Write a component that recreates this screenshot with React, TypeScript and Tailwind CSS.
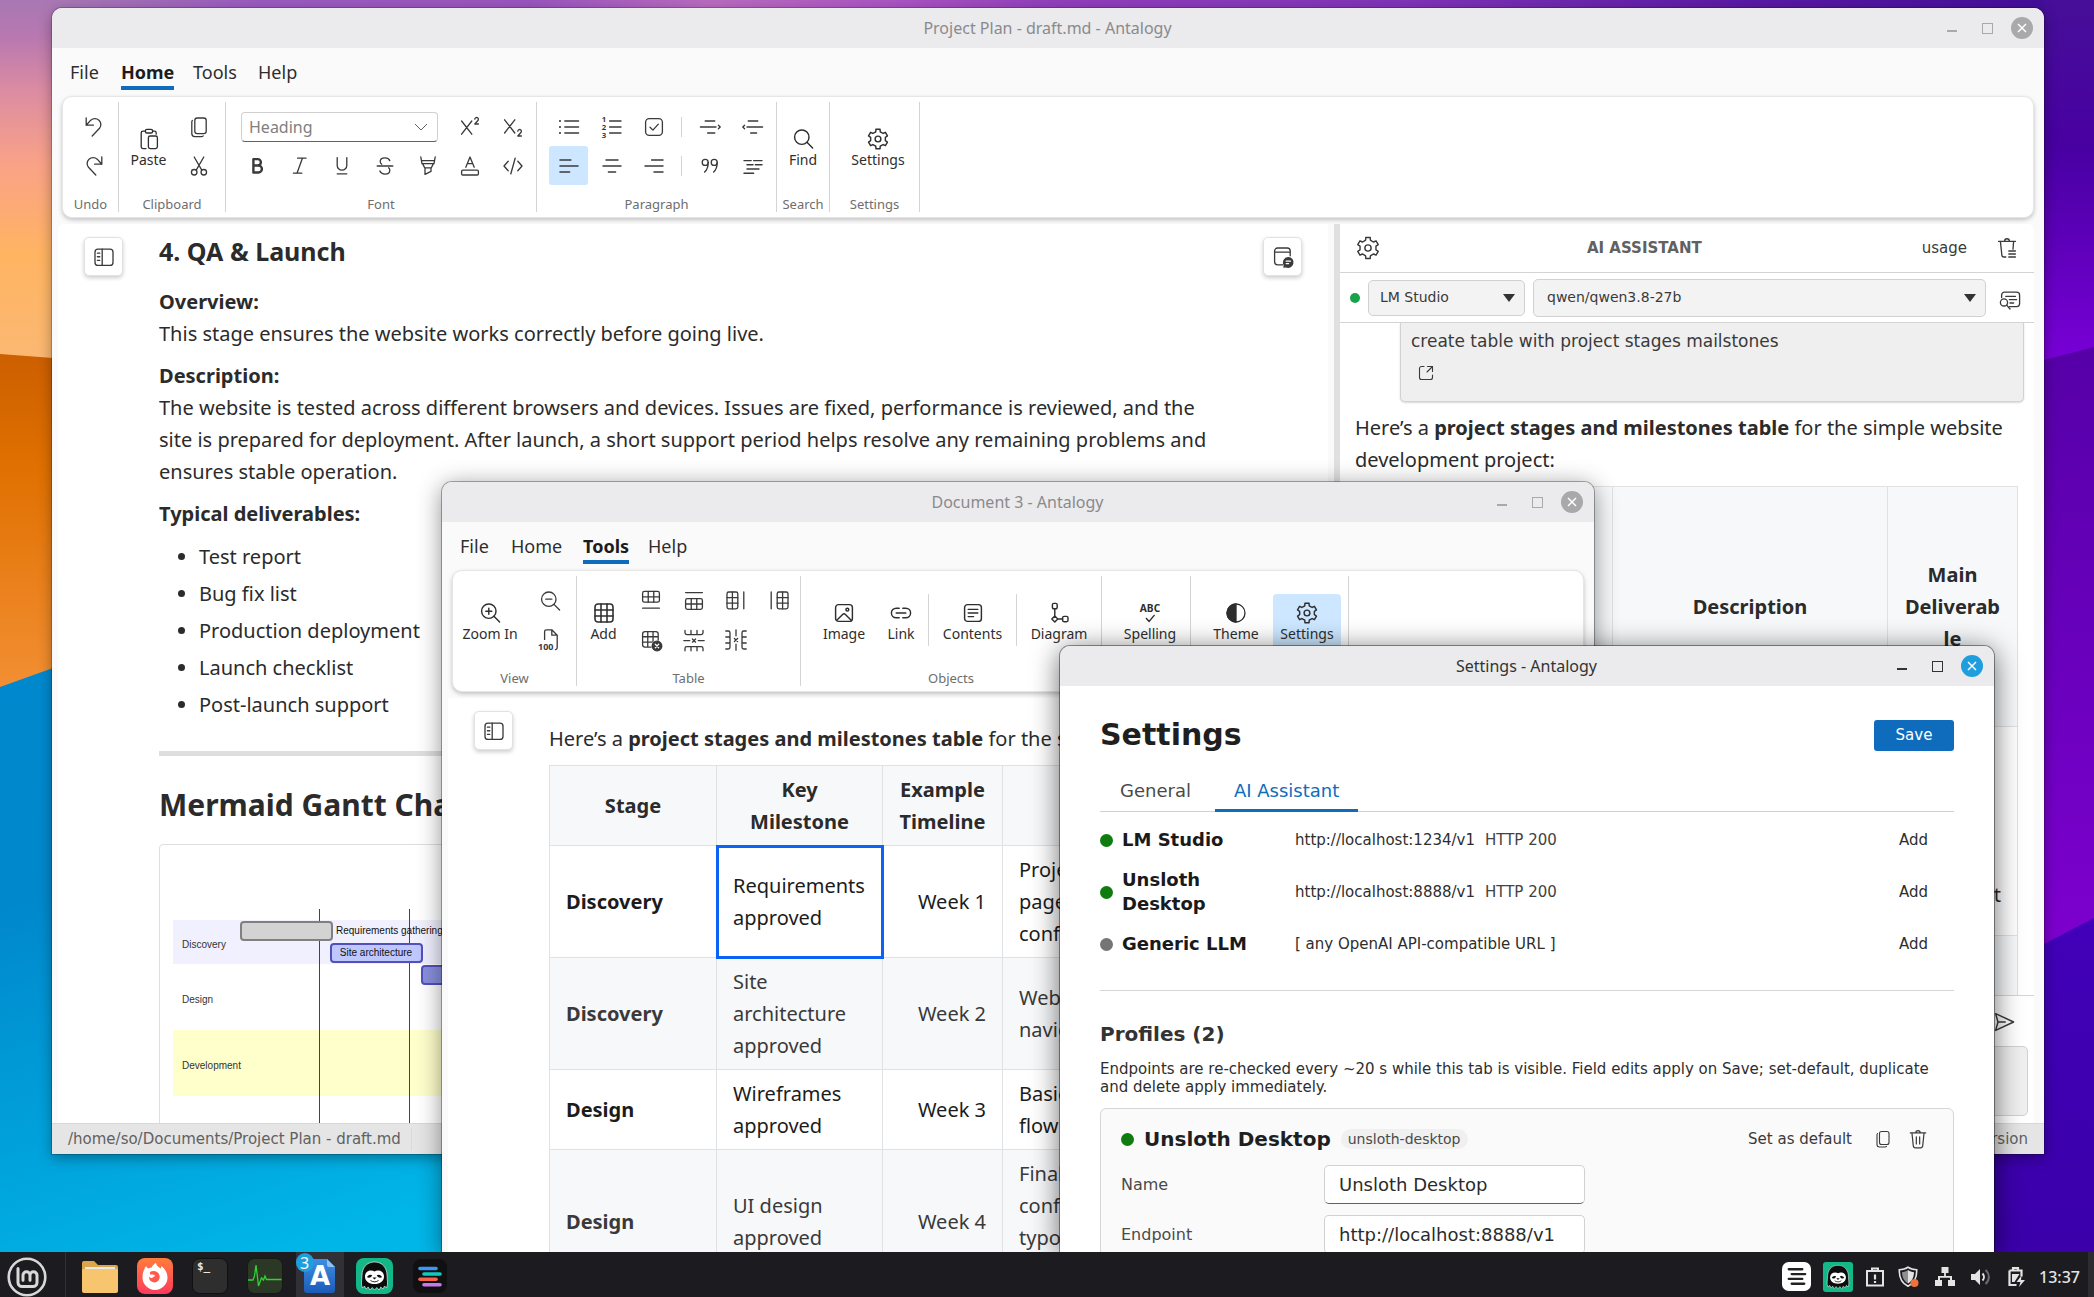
import type { ReactNode } from 'react';
import clsx from 'clsx';

/* ---------- icons ---------- */

type IconProps = { className?: string; children: ReactNode; sw?: number };

function Icon({ className = 'h-6 w-6', children, sw = 1.1 }: IconProps) {
  return (
    <svg viewBox="0 0 20 20" className={clsx('shrink-0', className)} fill="none" stroke="currentColor" strokeWidth={sw} strokeLinecap="round" strokeLinejoin="round" aria-hidden="true">
      {children}
    </svg>
  );
}

// six rounded teeth around the hub
const gearPath = (() => {
  const pts: string[] = [];
  for (let i = 0; i < 6; i++) {
    const base = i * 60 - 90;
    for (const [off, r] of [[-30, 6.1], [-17, 6.3], [-12, 8.3], [12, 8.3], [17, 6.3]]) {
      const a = ((base + off) * Math.PI) / 180;
      pts.push(`${(10 + r * Math.cos(a)).toFixed(2)} ${(10 + r * Math.sin(a)).toFixed(2)}`);
    }
  }
  return `M${pts.join('L')}Z`;
})();

const Gear = ({ className, sw }: { className?: string; sw?: number }) => (
  <Icon className={className} sw={sw}>
    <path d={gearPath} />
    <circle cx="10" cy="10" r="2.4" />
  </Icon>
);
const Undo = () => <Icon><path d="M3.5 2.5v6h6M3.5 8.5l3.8-4.2a5 5 0 0 1 7.3 6.8L8.5 17.5" /></Icon>;
const Redo = () => <Icon><path d="M16.5 2.5v6h-6M16.5 8.5l-3.8-4.2a5 5 0 0 0-7.3 6.8l6.1 6.4" /></Icon>;
const PasteIcon = () => (
  <Icon>
    <path d="M7 3.5H5A1.5 1.5 0 0 0 3.5 5v11.5A1.5 1.5 0 0 0 5 18h2.5M13 3.5h1.5A1.5 1.5 0 0 1 16 5v1" />
    <rect x="7" y="2" width="6" height="3" rx="1.3" />
    <rect x="9.5" y="7.5" width="7.5" height="10.5" rx="1.5" />
  </Icon>
);
const CopyIcon = ({ className }: { className?: string }) => (
  <Icon className={className}>
    <rect x="6.5" y="2.5" width="9.5" height="13" rx="2" />
    <path d="M4.5 4.5A2 2 0 0 0 4 6v9.5A2.5 2.5 0 0 0 6.5 18H12a2 2 0 0 0 1.5-.6" />
  </Icon>
);
const Cut = () => (
  <Icon>
    <path d="M6 2.5l6.2 10.7M14 2.5L7.8 13.2" />
    <circle cx="6" cy="15.2" r="2.3" />
    <circle cx="14" cy="15.2" r="2.3" />
  </Icon>
);
const Sup = () => (
  <Icon>
    <path d="M3 5l8.5 11M11.5 5L3 16M14 3.4a1.5 1.5 0 1 1 2.6 1.2L14 7.5h3" />
  </Icon>
);
const Sub = () => (
  <Icon>
    <path d="M3 4l8.5 11M11.5 4L3 15M14 13.4a1.5 1.5 0 1 1 2.6 1.2L14 17.5h3" />
  </Icon>
);
const Bold = () => <Icon sw={2}><path d="M7 4.3h3.6a2.6 2.6 0 0 1 0 5.3H7zM7 9.6h4.2a2.9 2.9 0 0 1 0 5.8H7z" /></Icon>;
const Italic = () => <Icon><path d="M8 3.5h7M4.5 16h7M12 3.5L7.5 16" /></Icon>;
const Underline = () => <Icon><path d="M6 3v6.5a4 4 0 0 0 8 0V3M6 16.5h8" /></Icon>;
const Strike = () => <Icon><path d="M14 5.5C13.3 4 11.9 3.3 10 3.3c-2.2 0-4 1.1-4 3 0 1 .5 1.7 1.3 2.2M3.5 10h13M13 11.5c.6.5 1 1.2 1 2 0 2-1.7 3.2-4 3.2-2 0-3.6-.9-4.3-2.5" /></Icon>;
const Highlight = () => <Icon><path d="M4 2.5l1 5.5h10l1-5.5M4.5 5.5h11M5.5 8l1.7 3.5h5.6L14.5 8M7.5 11.5V17l5-2.5v-3" /></Icon>;
const FontColor = () => <Icon><path d="M6.5 11L10 2.5 13.5 11M7.7 8h4.6" /><rect x="3" y="13.5" width="14" height="4" rx="1" /></Icon>;
const Code = () => <Icon><path d="M6 6l-3.5 4L6 14M14 6l3.5 4-3.5 4M11.8 3.5L8.2 16.5" /></Icon>;
const Bullets = () => <Icon><path d="M6.5 5H18M6.5 10H18M6.5 15H18" /><path strokeWidth="1.8" d="M2.5 5h0M2.5 10h0M2.5 15h0" /></Icon>;
const Numbers = () => (
  <Icon>
    <path d="M8 5h9.5M8 10h9.5M8 15h9.5" />
    <g fill="currentColor" stroke="none" fontSize="6.5" fontWeight="700" fontFamily="Noto Sans, sans-serif">
      <text x="1.5" y="5.8">1</text><text x="1.5" y="12.3">2</text><text x="1.5" y="18.8">3</text>
    </g>
  </Icon>
);
const Check = () => <Icon><rect x="3" y="3" width="14" height="14" rx="3" /><path d="M6.7 10.2l2.4 2.4 4.5-5" /></Icon>;
const Indent = () => <Icon><path d="M6 5h8M2 10h13M8 15h6M17 8.5l1.5 1.5-1.5 1.5" /></Icon>;
const Outdent = () => <Icon><path d="M6 5h8M5 10h13M8 15h5M3 8.5L1.5 10 3 11.5" /></Icon>;
const AlignL = () => <Icon sw={1.3}><path d="M2.5 5h9M2.5 10h15M2.5 15h8" /></Icon>;
const AlignC = () => <Icon sw={1.2}><path d="M5 5h10M2.5 10h15M7 15h6" /></Icon>;
const AlignR = () => <Icon sw={1.2}><path d="M8 5h9.5M2.5 10h15M10 15h7.5" /></Icon>;
const Quote = () => (
  <Icon>
    <circle cx="6" cy="7" r="2.5" /><path d="M8.5 7c0 3.5-.8 6-3 8" />
    <circle cx="13.5" cy="7" r="2.5" /><path d="M16 7c0 3.5-.8 6-3 8" />
  </Icon>
);
const ClearFormat = () => <Icon sw={1.2}><path d="M2.5 5.5h6M10.5 5.5h7M5 9h5M12 9h5.5M5 12.5h10M2.5 16h8" /></Icon>;
const Find = () => <Icon sw={1.2}><circle cx="9" cy="8.5" r="6" /><path d="M13.3 12.8L18 17.5" /></Icon>;
const ZoomIn = () => <Icon sw={1.2}><circle cx="9" cy="8.5" r="6" /><path d="M13.3 12.8L18 17.5M9 6v5M6.5 8.5h5" /></Icon>;
const ZoomOut = () => <Icon><circle cx="9" cy="8.5" r="6" /><path d="M13.3 12.8L18 17.5M6.5 8.5h5" /></Icon>;
const Page100 = () => (
  <Icon>
    <path d="M5.5 9.5V3A1.5 1.5 0 0 1 7 1.5h4.5L16 6v10.5a1.5 1.5 0 0 1-1.5 1.5M11.5 1.5V6H16" />
    <text x="0" y="18" fill="currentColor" stroke="none" fontSize="7.5" fontWeight="700" fontFamily="Noto Sans, sans-serif">100</text>
  </Icon>
);
const TableIcon = () => <Icon sw={1.3}><rect x="2.5" y="2.5" width="15" height="15" rx="2.5" /><path d="M2.5 7.5h15M2.5 12.5h15M7.5 2.5v15M12.5 2.5v15" /></Icon>;
const RowBelow = () => <Icon><rect x="3" y="2" width="14" height="9" rx="1.5" /><path d="M3 6.5h14M7.7 2v9M12.3 2v9M3 16h14" /></Icon>;
const RowAbove = () => <Icon><rect x="3" y="8" width="14" height="9" rx="1.5" /><path d="M3 12.5h14M7.7 8v9M12.3 8v9M3 3h14" /></Icon>;
const ColRight = () => <Icon><rect x="2.5" y="2.5" width="9" height="14" rx="1.5" /><path d="M7 2.5v14M2.5 7.2h9M2.5 11.8h9M16.5 2.5v14" /></Icon>;
const ColLeft = () => <Icon><rect x="8.5" y="2.5" width="9" height="14" rx="1.5" /><path d="M13 2.5v14M8.5 7.2h9M8.5 11.8h9M3.5 2.5v14" /></Icon>;
const TableDelete = () => (
  <Icon>
    <path d="M10 16H5a2 2 0 0 1-2-2V5a2 2 0 0 1 2-2h9a2 2 0 0 1 2 2v5M3 7.3h13M3 11.7h8M7.3 3v13M11.7 3v8" />
    <circle cx="15" cy="15" r="4" fill="currentColor" stroke="currentColor" />
    <path stroke="#fff" d="M13.6 13.6l2.8 2.8M16.4 13.6l-2.8 2.8" />
  </Icon>
);
const RowDelete = () => <Icon><path d="M2.5 2v2A1.5 1.5 0 0 0 4 5.5h12A1.5 1.5 0 0 0 17.5 4V2M7.5 2v3.5M12.5 2v3.5M2.5 19v-2A1.5 1.5 0 0 1 4 15.5h12a1.5 1.5 0 0 1 1.5 1.5v2M7.5 19v-3.5M12.5 19v-3.5M1.5 10.5h5M13.5 10.5h5M8.7 9.2l2.6 2.6M11.3 9.2l-2.6 2.6" /></Icon>;
const ColDelete = () => <Icon><path d="M1.5 2.5h2A1.5 1.5 0 0 1 5 4v12a1.5 1.5 0 0 1-1.5 1.5h-2M1.5 7.5H5M1.5 12.5H5M18.5 2.5h-2A1.5 1.5 0 0 0 15 4v12a1.5 1.5 0 0 0 1.5 1.5h2M18.5 7.5H15M18.5 12.5H15M10 1.5v5M10 13.5v5M8.7 8.7l2.6 2.6M11.3 8.7l-2.6 2.6" /></Icon>;
const ImageIcon = () => <Icon sw={1.2}><rect x="3" y="3" width="14" height="14" rx="2.5" /><circle cx="12.8" cy="7.2" r="1.2" /><path d="M4 16l4.8-4.8a1.7 1.7 0 0 1 2.4 0L16 16" /></Icon>;
const LinkIcon = () => <Icon sw={1.2}><path d="M8.5 6H6a4 4 0 0 0 0 8h2.5M11.5 6H14a4 4 0 0 1 0 8h-2.5M6 10h8" /></Icon>;
const Contents = () => <Icon sw={1.2}><rect x="3" y="3" width="14" height="14" rx="2.5" /><path d="M6 7h8M6 10h8M6 13h4.5" /></Icon>;
const Diagram = () => <Icon sw={1.2}><rect x="4.5" y="2" width="4" height="4.5" rx="1.2" /><path d="M6.5 6.5v6M4 15l2.5-2.5L9 15l-2.5 2.5zM9 15h4" /><rect x="13" y="12.8" width="4.5" height="4.5" rx="1.2" /></Icon>;
const Spelling = () => (
  <Icon>
    <text x="10" y="9" textAnchor="middle" fill="currentColor" stroke="none" fontSize="8.5" fontWeight="700" fontFamily="Noto Sans, sans-serif">ABC</text>
    <path strokeWidth="1.2" d="M7 14.5l2.3 2.5 4.2-5" />
  </Icon>
);
const Theme = () => <Icon sw={1.1}><circle cx="10" cy="10" r="7.5" /><path fill="currentColor" d="M10 2.5a7.5 7.5 0 0 0 0 15z" /></Icon>;
const Sidebar = () => <Icon><rect x="2.5" y="3.5" width="15" height="13.5" rx="2.5" /><path d="M8.5 3.5V17M4.5 6.8h2M4.5 9.8h2M4.5 12.8h2" /></Icon>;
const PanelChat = () => (
  <Icon>
    <path d="M10 16.5H5.5A2.5 2.5 0 0 1 3 14V5a2.5 2.5 0 0 1 2.5-2.5h8A2.5 2.5 0 0 1 16 5v4M3 6h13" />
    <path fill="currentColor" d="M14.3 10.5a4 4 0 1 1-2 7.5l-1.5.4.4-1.6a4 4 0 0 1 3.1-6.3z" />
    <path stroke="#fff" d="M12.7 13.5h3.5M12.7 15.5h2" />
  </Icon>
);
const TrashLines = () => <Icon><path d="M3 4.5h14M8 4.3a2 2 0 0 1 4 0M4.5 4.5l1.2 11.3A1.8 1.8 0 0 0 7.5 17.5H9M15.5 4.5L15 11M11.5 12.5H17M11.5 15H17M11.5 17.5H17" /></Icon>;
const Trash = () => <Icon className="h-[22px] w-[22px]"><path d="M3 4.5h14M8 4.3a2 2 0 0 1 4 0M4.5 4.5l1.2 11.5A2 2 0 0 0 7.7 18h4.6a2 2 0 0 0 2-2l1.2-11.5M8.5 8v6.5M11.5 8v6.5" /></Icon>;
const ChatSearch = () => <Icon><path d="M3 8V6a2.5 2.5 0 0 1 2.5-2.5h10A2.5 2.5 0 0 1 18 6v7a2.5 2.5 0 0 1-2.5 2.5h-6M6.5 7h8M9.5 9.7h6M10 12.5h3" /><circle cx="5" cy="12" r="3" /><path d="M7.2 14.3l2.8 3.2" /></Icon>;
const OpenIcon = () => <Icon className="h-5 w-5"><path d="M8 3.5H5.5a2 2 0 0 0-2 2v9a2 2 0 0 0 2 2h9a2 2 0 0 0 2-2V12M11.5 3.5h5v5M16.5 3.5L11 9" /></Icon>;
const Send = () => <Icon sw={1.2}><path d="M3 3l15 7-15 7 2-7zM5 10h6" /></Icon>;
const Caret = () => (
  <svg viewBox="0 0 12 8" className="pointer-events-none absolute right-[10px] h-2 w-3" aria-hidden="true"><path d="M0 0h12L6 8z" fill="#333" /></svg>
);

const Sloth = ({ className }: { className?: string }) => (
  <svg viewBox="0 0 36 36" className={className} aria-hidden="true">
    <path d="M18 4C10 4 5.5 10 5.5 17.5 5.5 22 4 26 6 30l2-2 1.5 3 2.2-2 1.8 3 2.2-2.5L18 32l2.3-2.5 2.2 2.5 1.8-3 2.2 2 1.5-3 2 2c2-4 .5-8 .5-12.5C30.5 10 26 4 18 4z" fill="#0c0c0c" stroke="#fff" strokeWidth="0.6" />
    <path d="M18 13.5c3-2 9-1 9.5 4.5.3 5-4 8-9.5 8s-9.8-3-9.5-8c.5-5.5 6.5-6.5 9.5-4.5z" fill="#fff" />
    <path d="M10.500 19.300c.8-2.300 3.300-3.300 5.200-2-.7 2.100-2.900 3.100-5.200 2zM25.500 19.300c-.8-2.300-3.300-3.300-5.200-2 .7 2.100 2.900 3.100 5.200 2z" fill="#0c0c0c" />
    <path d="M16 19.500h4l-2 2z" fill="#0c0c0c" />
    <path d="M14 22.500c2.300 1.800 5.700 1.800 8 0" fill="none" stroke="#0c0c0c" strokeWidth="0.9" />
  </svg>
);

/* ---------- shared window parts ---------- */

type WindowProps = { title: string; active?: boolean; className: string; children: ReactNode };

function Window({ title, active, className, children }: WindowProps) {
  const tone = active ? 'text-[#333333]' : 'text-[#8a8a8c]';
  return (
    <section aria-label={title} className={clsx('absolute flex flex-col overflow-hidden rounded-t-[10px] bg-[#fafafa] ring-1', className)}>
      <header className={clsx('flex h-10 shrink-0 items-center bg-[#ebebed] pr-[11px] pl-[102px]', tone)}>
        <h2 className="flex-1 text-center text-[16px]">{title}</h2>
        <div className={clsx('flex items-center gap-[13px]', active ? 'text-[#333333]' : 'text-[#a9a9ab]')}>
          <button aria-label="Minimize" className="flex h-[22px] w-[22px] items-center justify-center pt-[6px]"><span className="h-[2px] w-[10px] bg-current" /></button>
          <button aria-label="Maximize" className="flex h-[22px] w-[22px] items-center justify-center"><span className="h-[11px] w-[11px] border border-current" /></button>
          <button aria-label="Close" className={clsx('flex h-[22px] w-[22px] items-center justify-center rounded-full text-white', active ? 'bg-[#1f9ede]' : 'bg-[#a9a9ab]')}>
            <svg viewBox="0 0 10 10" className="h-[10px] w-[10px]" stroke="currentColor" strokeWidth="1.5"><path d="M1 1l8 8M9 1L1 9" /></svg>
          </button>
        </div>
      </header>
      {children}
    </section>
  );
}

function Menu({ current }: { current: string }) {
  const tabs = [['File', 'w-[51px]'], ['Home', 'w-[72px]'], ['Tools', 'w-[65px]'], ['Help', 'w-[60px]']];
  return (
    <nav className="flex h-12 shrink-0 items-center pl-[18px] text-[18px] text-[#2e2e2e]">
      {tabs.map(([name, width]) => (
        <div key={name} className={width}>
          <button className={clsx('h-[36px] border-b-4 pt-1 leading-[26px]', name === current ? 'border-[#0f6cbd] font-bold text-[#1c1c1c]' : 'border-transparent')}>{name}</button>
        </div>
      ))}
    </nav>
  );
}

const Ribbon = ({ children }: { children: ReactNode }) => (
  <div className="mx-[10px] mb-[6px] flex h-[122px] shrink-0 rounded-[10px] border border-[#e6e6e6] bg-white py-[5px] shadow-[0_2px_4px_rgba(0,0,0,0.22)]">{children}</div>
);

function Group({ label, className, children }: { label: string; className: string; children: ReactNode }) {
  return (
    <div className={clsx('flex shrink-0 flex-col border-r border-[#d4d4d4]', className)}>
      <div className="mt-[5px] flex h-[78px] text-[#3a3a3a]">{children}</div>
      <div className="mt-auto text-center text-[13px] leading-4 text-[#6e6e6e]">{label}</div>
    </div>
  );
}

function BigButton({ label, icon, className, active }: { label: string; icon: ReactNode; className: string; active?: boolean }) {
  return (
    <button className={clsx('mt-[13px] flex h-[56px] shrink-0 flex-col items-center rounded pt-[7px] text-[14px] leading-[17px] text-[#2e2e2e]', active && 'bg-[#cce7ff]', className)}>
      {icon}
      {label}
    </button>
  );
}

const Tool = ({ label, active, children }: { label: string; active?: boolean; children: ReactNode }) => (
  <button aria-label={label} className={clsx('mx-auto flex h-[39px] w-[39px] items-center justify-center rounded-[3px]', active && 'bg-[#cce7ff]')}>{children}</button>
);

const FloatButton = ({ label, children }: { label: string; children: ReactNode }) => (
  <button aria-label={label} className="mt-[13px] flex h-[39px] w-[39px] shrink-0 items-center justify-center rounded-[5px] border border-[#e2e2e2] bg-white text-[#3a3a3a] shadow-[0_2px_4px_rgba(0,0,0,0.2)]">{children}</button>
);

/* ---------- project plan window ---------- */

function HomeRibbon() {
  return (
    <Ribbon>
      <Group label="Undo" className="w-[56px]">
        <div className="ml-[11px] flex w-10 flex-col">
          <Tool label="Undo"><Undo /></Tool>
          <Tool label="Redo"><Redo /></Tool>
        </div>
      </Group>
      <Group label="Clipboard" className="w-[107px]">
        <BigButton label="Paste" icon={<PasteIcon />} className="w-[59px]" />
        <div className="flex w-[42px] flex-col">
          <Tool label="Copy"><CopyIcon /></Tool>
          <Tool label="Cut"><Cut /></Tool>
        </div>
      </Group>
      <Group label="Font" className="w-[311px]">
        <div className="ml-[10px] grid w-[298px] grid-cols-7 items-center">
          <div className="relative col-span-5 ml-[5px] flex w-[197px] items-center">
            <select aria-label="Text style" className="h-[30px] w-full appearance-none rounded-[4px] border border-[#d1d1d1] border-b-[#616161] bg-white pl-[7px] text-[16px] text-[#808080]">
              <option>Heading</option>
            </select>
            <svg viewBox="0 0 14 8" className="pointer-events-none absolute right-[10px] h-2 w-[14px]" fill="none" stroke="#616161" aria-hidden="true"><path d="M1 1l6 6 6-6" /></svg>
          </div>
          <Tool label="Superscript"><Sup /></Tool>
          <Tool label="Subscript"><Sub /></Tool>
          <Tool label="Bold"><Bold /></Tool>
          <Tool label="Italic"><Italic /></Tool>
          <Tool label="Underline"><Underline /></Tool>
          <Tool label="Strikethrough"><Strike /></Tool>
          <Tool label="Highlight"><Highlight /></Tool>
          <Tool label="Font color"><FontColor /></Tool>
          <Tool label="Code"><Code /></Tool>
        </div>
      </Group>
      <Group label="Paragraph" className="w-[240px]">
        <div className="ml-[10px] grid grid-cols-[43px_43px_42px_13px_43px_43px] items-center">
          <Tool label="Bullets"><Bullets /></Tool>
          <Tool label="Numbering"><Numbers /></Tool>
          <Tool label="Task list"><Check /></Tool>
          <i className="mx-auto h-5 w-px bg-[#d4d4d4]" />
          <Tool label="Indent"><Indent /></Tool>
          <Tool label="Outdent"><Outdent /></Tool>
          <Tool label="Align left" active><AlignL /></Tool>
          <Tool label="Align center"><AlignC /></Tool>
          <Tool label="Align right"><AlignR /></Tool>
          <i className="mx-auto h-5 w-px bg-[#d4d4d4]" />
          <Tool label="Quote"><Quote /></Tool>
          <Tool label="Clear formatting"><ClearFormat /></Tool>
        </div>
      </Group>
      <Group label="Search" className="w-[53px]">
        <BigButton label="Find" icon={<Find />} className="w-[52px]" />
      </Group>
      <Group label="Settings" className="w-[90px]">
        <BigButton label="Settings" icon={<Gear sw={1.2} />} className="ml-[14px] w-[68px]" />
      </Group>
    </Ribbon>
  );
}

function Gantt() {
  return (
    <svg className="block h-[290px] w-full" fontFamily="Liberation Sans, sans-serif" fontSize="10" aria-label="Gantt chart">
      <rect x="13" y="75" width="1040" height="44" fill="#f0f0ff" />
      <rect x="13" y="185" width="1040" height="66" fill="#ffffcc" />
      <g fill="#333">
        <text x="22" y="103">Discovery</text>
        <text x="22" y="158">Design</text>
        <text x="22" y="224">Development</text>
      </g>
      <path d="M159.5 64v226M249.5 64v226" stroke="#444" />
      <rect x="81" y="77" width="91" height="18" rx="3" fill="#d3d3d3" stroke="#808080" strokeWidth="2" />
      <rect x="171" y="99" width="91" height="18" rx="3" fill="#bfc7ff" stroke="#534fbc" strokeWidth="2" />
      <rect x="262" y="121" width="91" height="18" rx="3" fill="#8a90dd" stroke="#534fbc" strokeWidth="2" />
      <text x="176" y="89" fill="#111">Requirements gathering</text>
      <text x="216" y="111" fill="#111" textAnchor="middle">Site architecture</text>
    </svg>
  );
}

const deliverables = ['Test report', 'Bug fix list', 'Production deployment', 'Launch checklist', 'Post-launch support'];

function PlanDocument() {
  return (
    <main className="flex min-w-0 flex-1 items-start justify-between overflow-hidden rounded-tl-md bg-white px-[26px]">
      <FloatButton label="Toggle outline"><Sidebar /></FloatButton>
      <article className="mr-[35px] ml-[36px] min-w-0 flex-1 pt-[11px] text-[20px] leading-8 text-[#2b2b2b]">
        <h3 className="mb-[19px] text-[25px] leading-8 font-bold">4. QA &amp; Launch</h3>
        <p className="mb-[10px]"><b>Overview:</b><br />This stage ensures the website works correctly before going live.</p>
        <p className="mb-[10px]">
          <b>Description:</b><br />
          The website is tested across different browsers and devices. Issues are fixed, performance is reviewed, and the site is prepared for deployment. After launch, a short support period helps resolve any remaining problems and ensures stable operation.
        </p>
        <p className="mb-[11px] font-bold">Typical deliverables:</p>
        <ul className="mb-[30px] list-disc space-y-[5px] pl-10">
          {deliverables.map((d) => <li key={d}>{d}</li>)}
        </ul>
        <hr className="mb-[29px] border-t-[5px] border-[#dedede]" />
        <h2 className="mb-[19px] text-[30px] leading-10 font-bold">Mermaid Gantt Chart</h2>
        <div className="rounded-[4px] border border-[#dedede]"><Gantt /></div>
      </article>
      <FloatButton label="Toggle assistant"><PanelChat /></FloatButton>
    </main>
  );
}

const dejavu = "font-['DejaVu_Sans',sans-serif]";

function Assistant() {
  return (
    <aside className="flex w-[694px] shrink-0 flex-col overflow-hidden rounded-tr-md bg-white text-[#3a3a3a]">
      <div className={clsx('flex h-[49px] shrink-0 items-center border-b border-[#d4d4d4] pr-[15px] pl-[15px]', dejavu)}>
        <button aria-label="Assistant settings"><Gear className="h-[26px] w-[26px]" /></button>
        <h3 className="flex-1 pr-[14px] text-center text-[15px] font-bold text-[#616161]">AI ASSISTANT</h3>
        <a href="#usage" className="mr-[28px] text-[15px]">usage</a>
        <button aria-label="Clear chat"><TrashLines /></button>
      </div>
      <div className={clsx('flex h-[50px] shrink-0 items-center border-b border-[#d4d4d4] pr-[12px] pl-[10px] text-[14px]', dejavu)}>
        <span className="h-[10px] w-[10px] rounded-full bg-[#16a34a]" />
        <div className="relative ml-2 flex w-[157px] items-center">
          <select aria-label="Provider" className="h-9 w-full appearance-none rounded-[5px] border border-[#d1d1d1] bg-[#f3f3f3] pl-[11px]"><option>LM Studio</option></select>
          <Caret />
        </div>
        <div className="relative ml-2 flex flex-1 items-center">
          <select aria-label="Model" className="h-[38px] w-full appearance-none rounded-[5px] border border-[#d1d1d1] bg-[#f3f3f3] pl-[13px]"><option>qwen/qwen3.8-27b</option></select>
          <Caret />
        </div>
        <button aria-label="Search chat" className="mt-1 ml-3"><ChatSearch /></button>
      </div>
      <div className="min-h-0 flex-1 overflow-hidden pr-[10px] pl-[15px] text-[20px] leading-8 text-[#2b2b2b]">
        <div className={clsx('ml-[45px] h-[79px] rounded-b-[5px] border border-t-0 border-[#d1d1d1] bg-[#efefef] pt-[2px] pl-[10px] text-[17px] text-[#3a3a3a] shadow-[0_1px_2px_rgba(0,0,0,0.15)]', dejavu)}>
          <p>create table with project stages mailstones</p>
          <button aria-label="Open message" className="mt-[6px] ml-[5px] block"><OpenIcon /></button>
        </div>
        <p className="mt-[10px] mb-[10px]">Here’s a <b>project stages and milestones table</b> for the simple website development project:</p>
        <table className="mr-[6px] w-[663px] table-fixed border-collapse text-center [&_td]:border [&_td]:border-[#dfe2e5] [&_th]:border [&_th]:border-[#dfe2e5]">
          <colgroup><col className="w-[86px]" /><col className="w-[86px]" /><col className="w-[85px]" /><col /><col className="w-[130px]" /></colgroup>
          <thead>
            <tr className="h-[240px] bg-[#f6f8fa]"><th /><th /><th /><th>Description</th><th>Main<br />Deliverab<br />le</th></tr>
          </thead>
          <tbody>
            <tr className="h-[209px]"><td /><td /><td /><td /><td className="pr-4 pb-[24px] text-right align-bottom">document</td></tr>
            <tr className="h-[209px] bg-[#f6f8fa]"><td /><td /><td /><td /><td /></tr>
          </tbody>
        </table>
      </div>
      <div className="flex h-[128px] shrink-0 flex-col border-t border-[#d4d4d4] pr-[6px] pb-[7px] pl-[10px]">
        <button aria-label="Send" className="mt-[14px] mr-[12px] mb-auto self-end"><Send /></button>
        <textarea aria-label="Message" className="h-[70px] resize-none rounded-[5px] border border-[#d1d1d1] bg-[#efefef]" />
      </div>
    </aside>
  );
}

function PlanWindow() {
  return (
    <Window title="Project Plan - draft.md - Antalogy" className="top-2 right-[50px] bottom-[98px] left-[52px] shadow-[0_4px_14px_rgba(0,0,0,0.35)] ring-black/20">
      <Menu current="Home" />
      <HomeRibbon />
      <div className="flex min-h-0 flex-1 pr-[10px] pl-[6px]">
        <PlanDocument />
        <div className="ml-[6px] w-[6px] shrink-0 bg-[#e0e0e0]" />
        <Assistant />
      </div>
      <footer className={clsx('flex h-[31px] shrink-0 items-center border-t border-[#d8d8d8] bg-[#e5e5e5] px-4 text-[15px] text-[#616161]', dejavu)}>
        <span className="border-r border-[#dadada] pr-[10px]">/home/so/Documents/Project Plan - draft.md</span>
        <span className="ml-auto">Version</span>
      </footer>
    </Window>
  );
}

/* ---------- document 3 window ---------- */

function ToolsRibbon() {
  return (
    <Ribbon>
      <Group label="View" className="w-[124px]">
        <BigButton label="Zoom In" icon={<ZoomIn />} className="ml-px w-[72px]" />
        <div className="flex w-12 flex-col">
          <Tool label="Zoom out"><ZoomOut /></Tool>
          <Tool label="Actual size"><Page100 /></Tool>
        </div>
      </Group>
      <Group label="Table" className="w-[224px]">
        <BigButton label="Add" icon={<TableIcon />} className="w-[53px]" />
        <div className="grid w-[170px] grid-cols-4">
          <Tool label="Row below"><RowBelow /></Tool>
          <Tool label="Row above"><RowAbove /></Tool>
          <Tool label="Column right"><ColRight /></Tool>
          <Tool label="Column left"><ColLeft /></Tool>
          <Tool label="Delete table"><TableDelete /></Tool>
          <Tool label="Delete row"><RowDelete /></Tool>
          <Tool label="Delete column"><ColDelete /></Tool>
        </div>
      </Group>
      <Group label="Objects" className="w-[301px]">
        <BigButton label="Image" icon={<ImageIcon />} className="ml-[13px] w-[60px]" />
        <BigButton label="Link" icon={<LinkIcon />} className="w-[54px]" />
        <i className="mt-[13px] h-[52px] w-px bg-[#d4d4d4]" />
        <BigButton label="Contents" icon={<Contents />} className="w-[87px]" />
        <i className="mt-[13px] h-[52px] w-px bg-[#d4d4d4]" />
        <BigButton label="Diagram" icon={<Diagram />} className="w-[84px]" />
      </Group>
      <Group label="Proofing" className="w-[89px]">
        <BigButton label="Spelling" icon={<Spelling />} className="ml-2 w-[80px]" />
      </Group>
      <Group label="Settings" className="w-[158px]">
        <BigButton label="Theme" icon={<Theme />} className="ml-2 w-[74px]" />
        <BigButton label="Settings" icon={<Gear sw={1.2} />} className="w-[68px]" active />
      </Group>
    </Ribbon>
  );
}

const stages = [
  { stage: 'Discovery', milestone: 'Requirements approved', week: 'Week 1', about: ['Project goals,', 'pages and scope', 'confirmed'] },
  { stage: 'Discovery', milestone: 'Site architecture approved', week: 'Week 2', about: ['Website map and', 'navigation ready'] },
  { stage: 'Design', milestone: 'Wireframes approved', week: 'Week 3', about: ['Basic layout and', 'flow defined'] },
  { stage: 'Design', milestone: 'UI design approved', week: 'Week 4', about: ['Final visuals', 'confirmed with', 'typography and', 'colors'] },
];

function DocumentWindow() {
  return (
    <Window title="Document 3 - Antalogy" className="top-[482px] right-[500px] bottom-0 left-[442px] shadow-[0_4px_24px_rgba(0,0,0,0.45)] ring-black/30">
      <Menu current="Tools" />
      <ToolsRibbon />
      <div className="flex min-h-0 flex-1 items-start overflow-hidden pl-[6px]">
        <div className="flex h-full w-full items-start bg-white pl-[26px]">
          <FloatButton label="Toggle outline"><Sidebar /></FloatButton>
          <article className="ml-[36px] pt-[25px] text-[20px] leading-8 text-[#2b2b2b]">
            <p className="mb-[10px]">Here’s a <b>project stages and milestones table</b> for the simple website development project:</p>
            <table className="w-[900px] table-fixed border-collapse [&_td]:border [&_td]:border-[#dfe2e5] [&_td]:px-4 [&_td]:pt-2 [&_td]:pb-[7px] [&_th]:border [&_th]:border-[#dfe2e5] [&_th]:px-4 [&_th]:pt-2 [&_th]:pb-[7px]">
              <colgroup><col className="w-[167px]" /><col className="w-[166px]" /><col className="w-[120px]" /><col /></colgroup>
              <thead className="bg-[#f6f8fa]">
                <tr><th>Stage</th><th>Key<br />Milestone</th><th className="whitespace-nowrap">Example<br />Timeline</th><th>Description</th></tr>
              </thead>
              <tbody>
                {stages.map((s, i) => (
                  <tr key={s.week} className={i % 2 ? 'bg-[#f6f8fa] text-[#3a3a3a]' : 'bg-white text-[#1c1c1c]'}>
                    <td className="font-bold">{s.stage}</td>
                    <td className={clsx(i === 0 && 'outline-[3px] -outline-offset-2 outline-[#0b63f6]')}>{s.milestone}</td>
                    <td className="text-right">{s.week}</td>
                    <td>{s.about.map((line) => <div key={line}>{line}</div>)}</td>
                  </tr>
                ))}
              </tbody>
            </table>
          </article>
        </div>
      </div>
    </Window>
  );
}

/* ---------- settings window ---------- */

const endpoints = [
  { name: 'LM Studio', url: 'http://localhost:1234/v1', status: 'HTTP 200', up: true },
  { name: 'Unsloth Desktop', url: 'http://localhost:8888/v1', status: 'HTTP 200', up: true },
  { name: 'Generic LLM', url: '[ any OpenAI API-compatible URL ]', status: '', up: false },
];

const Dot = ({ up }: { up: boolean }) => <span className={clsx('h-[13px] w-[13px] shrink-0 rounded-full', up ? 'bg-[#107c10]' : 'bg-[#757575]')} />;

function Field({ id, label, value }: { id: string; label: string; value: string }) {
  return (
    <div className="flex items-center">
      <label htmlFor={id} className="w-[203px] text-[16px] text-[#4a4a4a]">{label}</label>
      <input id={id} defaultValue={value} className="h-[39px] w-[261px] rounded-[5px] border border-[#d1d1d1] border-b-[#616161] bg-white px-[14px] text-[18px] text-[#2b2b2b]" />
    </div>
  );
}

function SettingsWindow() {
  return (
    <Window title="Settings - Antalogy" active className="top-[646px] right-[100px] bottom-0 left-[1060px] shadow-[0_4px_28px_rgba(0,0,0,0.6)] ring-black/40">
      <div className={clsx('flex-1 overflow-hidden bg-white px-10 text-[#1f1f1f]', dejavu)}>
        <div className="mt-[30px] flex items-center justify-between">
          <h1 className="text-[30px] leading-[38px] font-bold">Settings</h1>
          <button className="h-[31px] w-[80px] rounded-[3px] bg-[#0f6cbd] text-[15px] text-white">Save</button>
        </div>
        <div role="tablist" className="mt-[18px] flex h-10 border-b border-[#d1d1d1] text-[18px]">
          <button role="tab" aria-selected="false" className="pr-[18px] pb-[3px] pl-[20px] text-[#4a4a4a]">General</button>
          <button role="tab" aria-selected="true" className="-mb-px ml-[6px] border-b-[3px] border-[#0f6cbd] px-[19px] text-[#0f6cbd]">AI Assistant</button>
        </div>
        <ul className="mt-[2px] mb-[20px]">
          {endpoints.map((e) => (
            <li key={e.name} className="flex min-h-[52px] items-center text-[15px] text-[#2e2e2e]">
              <Dot up={e.up} />
              <b className="ml-[9px] w-[173px] pr-6 text-[18px] leading-6 text-[#1a1a1a]">{e.name}</b>
              <span>{e.url}</span>
              <span className="ml-[10px] text-[#424242]">{e.status}</span>
              <button className="mr-[26px] ml-auto">Add</button>
            </li>
          ))}
        </ul>
        <hr className="border-[#d6d6d6]" />
        <h2 className="mt-[31px] text-[20px] leading-6 font-bold text-[#333333]">Profiles (2)</h2>
        <p className="mt-[14px] text-[15px] leading-[18px] text-[#2e2e2e]">Endpoints are re-checked every ~20 s while this tab is visible. Field edits apply on Save; set-default, duplicate and delete apply immediately.</p>
        <section className="mt-3 h-[300px] rounded-[6px] border border-[#d6d6d6] bg-[#fafafa] pr-6 pl-5">
          <div className="mt-[16px] mb-[12px] flex h-[28px] items-center">
            <Dot up />
            <h3 className="ml-[10px] text-[20px] font-bold">Unsloth Desktop</h3>
            <span className="ml-[10px] rounded-full bg-[#f0f0f0] px-[7px] text-[14px] leading-[20px] text-[#4a4a4a]">unsloth-desktop</span>
            <button className="ml-auto text-[15px] text-[#3a3a3a]">Set as default</button>
            <button aria-label="Duplicate" className="ml-[21px] text-[#3a3a3a]"><CopyIcon className="h-5 w-5" /></button>
            <button aria-label="Delete" className="ml-[14px] text-[#3a3a3a]"><Trash /></button>
          </div>
          <div className="space-y-[11px]">
            <Field id="profile-name" label="Name" value="Unsloth Desktop" />
            <Field id="profile-endpoint" label="Endpoint" value="http://localhost:8888/v1" />
          </div>
        </section>
      </div>
    </Window>
  );
}

/* ---------- desktop ---------- */

function Wallpaper() {
  return (
    <svg viewBox="0 0 2094 1252" preserveAspectRatio="none" className="absolute inset-0 h-full w-full" aria-hidden="true">
      <defs>
        <linearGradient id="top"><stop offset="0" stopColor="#a878b4" /><stop offset=".1" stopColor="#9a5cc0" /><stop offset=".24" stopColor="#9a56bf" /><stop offset=".33" stopColor="#ba6cc0" /><stop offset=".42" stopColor="#ac55c4" /><stop offset=".5" stopColor="#9240bc" /><stop offset=".68" stopColor="#8034b8" /><stop offset=".85" stopColor="#5a1aa4" /><stop offset="1" stopColor="#430e98" /></linearGradient>
        <linearGradient id="peach" x2="0" y2="1"><stop offset="0" stopColor="#a878b4" /><stop offset=".1" stopColor="#b878b0" /><stop offset=".25" stopColor="#dc8ca2" /><stop offset=".45" stopColor="#faa287" /><stop offset=".7" stopColor="#ffb462" /><stop offset="1" stopColor="#fbb873" /></linearGradient>
        <linearGradient id="orange" x2="0" y2="1"><stop offset="0" stopColor="#cc5f00" /><stop offset=".25" stopColor="#e07000" /><stop offset=".8" stopColor="#f49238" /></linearGradient>
        <linearGradient id="sea" x2=".25" y2="1"><stop offset="0" stopColor="#0088d0" /><stop offset=".5" stopColor="#0088cc" /><stop offset="1" stopColor="#00b6e8" /></linearGradient>
        <linearGradient id="violet" x2="0" y2="1"><stop offset="0" stopColor="#460f98" /><stop offset=".4" stopColor="#4800a2" /><stop offset="1" stopColor="#7a00d8" /></linearGradient>
        <linearGradient id="magenta" x2="0" y2="1"><stop offset="0" stopColor="#5600a8" /><stop offset=".5" stopColor="#6a00be" /><stop offset="1" stopColor="#8000d0" /></linearGradient>
        <linearGradient id="indigo" x2="0" y2="1"><stop offset="0" stopColor="#4200b8" /><stop offset="1" stopColor="#3a00a8" /></linearGradient>
      </defs>
      <rect width="2094" height="30" fill="url(#top)" />
      <rect width="300" height="364" fill="url(#peach)" />
      <path d="M0 354l53 4 250 40v400H0z" fill="url(#orange)" />
      <path d="M0 687l53-19 600-200v829H0z" fill="url(#sea)" />
      <rect x="2040" width="54" height="366" fill="url(#violet)" />
      <path d="M2094 347l-50 13-150 30v600h200z" fill="url(#magenta)" />
      <path d="M2094 918l-50 26-250 140v213h300z" fill="url(#indigo)" />
      <rect x="54" width="1990" height="12" fill="url(#top)" />
    </svg>
  );
}

const Launcher = ({ label, active, children }: { label: string; active?: boolean; children: ReactNode }) => (
  <button aria-label={label} className="flex h-full w-[55px] items-center justify-center">
    <span className={clsx('relative flex h-full w-12 items-center justify-center', active && 'bg-[#303036]')}>{children}</span>
  </button>
);

const TrayItem = ({ label, className = 'w-9', children }: { label: string; className?: string; children: ReactNode }) => (
  <button aria-label={label} className={clsx('flex items-center justify-center', className)}>{children}</button>
);

function Taskbar() {
  return (
    <footer className="relative flex h-[45px] shrink-0 items-center bg-[#1c1c20] text-[#e4e4e4]">
      <button aria-label="Menu" className="ml-[7px] flex w-[59px] border-r border-[#303036] pt-[5px]">
        <svg viewBox="0 0 40 40" className="h-10 w-10" fill="none" stroke="#d8d8d8" aria-hidden="true">
          <circle cx="20" cy="20" r="18.3" strokeWidth="2.6" />
          <path strokeWidth="3" strokeLinecap="round" strokeLinejoin="round" d="M11 11.5v14a4 4 0 0 0 4 4h11a4 4 0 0 0 4-4v-7.2a3.5 3.5 0 0 0-7 0v5M23 23.3v-5a3.5 3.5 0 0 0-7 0v5" />
        </svg>
      </button>
      <div className="ml-[6px] flex h-full">
        <Launcher label="Files">
          <svg viewBox="0 0 36 32" className="mt-1 h-8 w-9"><path d="M0 2a2 2 0 0 1 2-2h10l4 4h18a2 2 0 0 1 2 2v10H0z" fill="#dba54c" /><path d="M3 6h30v6H3z" fill="#e8e8e8" /><path d="M0 9.5A1.5 1.5 0 0 1 1.5 8h33A1.5 1.5 0 0 1 36 9.5V30a2 2 0 0 1-2 2H2a2 2 0 0 1-2-2z" fill="#f8c56f" /></svg>
        </Launcher>
        <Launcher label="Firefox">
          <svg viewBox="0 0 36 36" className="mt-[3px] h-9 w-9">
            <defs><linearGradient id="fx" x2="0" y2="1"><stop offset="0" stopColor="#ff7d3c" /><stop offset="1" stopColor="#ff3b5c" /></linearGradient></defs>
            <rect width="36" height="36" rx="8" fill="url(#fx)" />
            <path d="M7 12c.5-1.5 1.2-2.8 2-4 .5 1.2 1.3 2 2.5 2.5 1-.7 2-1 3.2-1C15.5 7.5 17 6 19 5c.3 2.5 2.5 4 4.5 5.5.7-.5 1-1.2 1-2.5 3.5 3 6 7 6 11.5a12.5 12.5 0 0 1-25 0c0-2.7.5-5.3 1.5-7.5z" fill="#fff" />
            <path d="M13 14c2-1.5 5-1.5 7 0 3 2 3.5 6 1.5 8.5-2.3 2.7-6.5 2.5-8.5-.2-.8-1-1-2.3-.8-3.5.8 1.2 2.2 1.5 3.3 1 1.2-.6 1.7-1.5 2.8-1.8-1-1.8-3.3-1.5-5.3-1.5z" fill="#ff5a4c" />
          </svg>
        </Launcher>
        <Launcher label="Terminal">
          <svg viewBox="0 0 36 36" className="mt-[3px] h-9 w-9"><rect x=".5" y=".5" width="35" height="35" rx="7" fill="#2e2e2e" stroke="#101010" /><text x="5" y="12" fontSize="11" fontWeight="700" fontFamily="DejaVu Sans Mono, monospace" fill="#e8e8e8">$_</text></svg>
        </Launcher>
        <Launcher label="System monitor">
          <svg viewBox="0 0 36 36" className="mt-[3px] h-9 w-9"><rect x=".5" y=".5" width="35" height="35" rx="7" fill="#2b3826" stroke="#151b12" /><path d="M1 22h5l1.500-4 1.500-11 2.500 21 3-8 2 2 1.500-4 1.500 3.500h15" fill="none" stroke="#2fd32f" strokeWidth="1.3" /></svg>
        </Launcher>
        <Launcher label="Antalogy" active>
          <svg viewBox="0 0 32 36" className="mt-[3px] h-9 w-8">
            <defs><linearGradient id="an" x2="0" y2="1"><stop offset="0" stopColor="#3d8fe0" /><stop offset="1" stopColor="#1c5cb8" /></linearGradient></defs>
            <path d="M3 1h20l8 8v23a3 3 0 0 1-3 3H3a3 3 0 0 1-3-3V4a3 3 0 0 1 3-3z" fill="url(#an)" />
            <path d="M23 1l8 8h-6a2 2 0 0 1-2-2z" fill="#8cc2f4" />
            <text x="16" y="27" textAnchor="middle" fontSize="26" fontWeight="700" fontFamily="DejaVu Sans, sans-serif" fill="#fff">A</text>
          </svg>
          <span className="absolute top-px left-0 flex h-[19px] w-[18px] items-center justify-center rounded-full bg-[#1f9ede] text-[16px] text-white">3</span>
        </Launcher>
        <Launcher label="Unsloth"><span className="mt-[3px] h-9 w-[37px] rounded-[8px] bg-[#14b888]"><Sloth className="h-9 w-[37px]" /></span></Launcher>
        <Launcher label="Task list">
          <svg viewBox="0 0 34 34" className="mt-[3px] h-[34px] w-[34px]"><rect width="34" height="34" rx="8" fill="#101010" /><g strokeWidth="3.6" strokeLinecap="round"><path d="M7 9.5h16" stroke="#3b96f5" /><path d="M11 15h16" stroke="#12c9c0" /><path d="M7 20.3h16" stroke="#f5634e" /><path d="M11 25.7h16" stroke="#c678f0" /></g></svg>
        </Launcher>
      </div>
      <div className="ml-auto flex h-full items-center pt-1">
        <TrayItem label="Tasks" className="w-[42px]">
          <svg viewBox="0 0 30 30" className="h-[29px] w-[29px]"><rect width="30" height="30" rx="7" fill="#fff" /><path d="M7 7.5h14M10 12.5h14M7 17.5h14M10 22.5h13" stroke="#222" strokeWidth="2.4" strokeLinecap="round" /></svg>
        </TrayItem>
        <TrayItem label="Unsloth tray" className="w-[41px]"><span className="rounded-[3px] bg-[#14b888]"><Sloth className="h-[30px] w-[30px]" /></span></TrayItem>
        <TrayItem label="Reports" className="w-[33px]">
          <svg viewBox="0 0 20 20" className="h-5 w-5"><path d="M2 4h16v14.5H2zM7 4V1.5h6V4" fill="none" stroke="currentColor" strokeWidth="2" /><path d="M10 7.5v5M10 14v2" stroke="currentColor" strokeWidth="2.2" /></svg>
        </TrayItem>
        <TrayItem label="Updates">
          <svg viewBox="0 0 22 22" className="h-[22px] w-[22px]"><path d="M10 1.2c2.5 2 5.5 2.6 8.7 2.6.3 7.5-2 13-8.7 16.4C3.3 16.8 1 11.3 1.3 3.8 4.5 3.8 7.5 3.2 10 1.2z" fill="none" stroke="currentColor" strokeWidth="1.6" /><path d="M10 4c-1.8 1.4-4 2-6 2.2.2 5 1.7 8.6 6 11.3z" fill="#8f8f92" /><path d="M10 4c1.8 1.4 4 2 6 2.2-.2 5-1.7 8.6-6 11.3z" fill="currentColor" /><circle cx="16.5" cy="17" r="4" fill="#f0713c" /></svg>
        </TrayItem>
        <TrayItem label="Network">
          <svg viewBox="0 0 20 20" className="h-5 w-5" fill="currentColor"><path d="M6.5 0h7v6h-2.6v3H17v4h3v6h-7v-6h2v-2.2H5V13h2v6H0v-6h3V9h6.1V6H6.5z" /></svg>
        </TrayItem>
        <TrayItem label="Volume">
          <svg viewBox="0 0 20 20" className="h-5 w-5"><path d="M0 7h4l5-5v16l-5-5H0z" fill="currentColor" /><path d="M11.5 6.5a5 5 0 0 1 0 7" fill="none" stroke="currentColor" strokeWidth="2" /><path d="M14.5 3a9 9 0 0 1 0 14" fill="none" stroke="#6b6b6e" strokeWidth="2" /></svg>
        </TrayItem>
        <TrayItem label="Battery">
          <svg viewBox="0 0 20 20" className="h-5 w-5"><path d="M2.5 3.5h12v6M2.5 3.5V18h7M6 3.5V1h5v2.5" fill="none" stroke="currentColor" strokeWidth="2.2" /><path d="M5 7h7.5l-5 8H5z" fill="currentColor" /><path d="M14.5 8.5l-5 6.5h4L12 20l6-7h-4z" fill="currentColor" /></svg>
        </TrayItem>
        <time className="mr-[14px] ml-[4px] text-[16px] font-medium">13:37</time>
      </div>
      <span className="absolute top-0 right-0 h-full w-[6px] bg-[#2c2c31]" />
    </footer>
  );
}

export default function App() {
  return (
    <div className="flex h-screen flex-col overflow-hidden font-['Noto_Sans',sans-serif]">
      <div className="relative min-h-0 flex-1 overflow-hidden">
        <Wallpaper />
        <PlanWindow />
        <DocumentWindow />
        <SettingsWindow />
      </div>
      <Taskbar />
    </div>
  );
}
